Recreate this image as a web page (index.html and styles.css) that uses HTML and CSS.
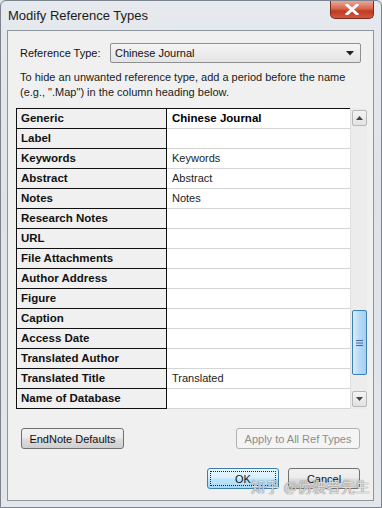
FILE: index.html
```html
<!DOCTYPE html>
<html>
<head>
<meta charset="utf-8">
<link rel="stylesheet" href="styles.css">
</head>
<body>
<div class="window">
  <div class="titlebar">
    <span class="title">Modify Reference Types</span>
    <div class="close"><svg width="16" height="11" viewBox="0 0 16 11"><path d="M3 1 L13 10 M13 1 L3 10" stroke="#fff" stroke-width="3" stroke-linecap="square"/></svg></div>
  </div>
  <div class="client">
    <div class="typerow">
      <span class="lbl">Reference Type:</span>
      <div class="select"><span>Chinese Journal</span><svg width="8" height="5" viewBox="0 0 8 5"><path d="M0 0 H8 L4 4.5 Z" fill="#222"/></svg></div>
    </div>
    <p class="hint">To hide an unwanted reference type, add a period before the name<br>(e.g., ".Map") in the column heading below.</p>
    <div class="gridwrap">
      <div class="grid">
        <div class="k">Generic</div><div class="v head">Chinese Journal</div>
        <div class="k">Label</div><div class="v"></div>
        <div class="k">Keywords</div><div class="v">Keywords</div>
        <div class="k">Abstract</div><div class="v">Abstract</div>
        <div class="k">Notes</div><div class="v">Notes</div>
        <div class="k">Research Notes</div><div class="v"></div>
        <div class="k">URL</div><div class="v"></div>
        <div class="k">File Attachments</div><div class="v"></div>
        <div class="k">Author Address</div><div class="v"></div>
        <div class="k">Figure</div><div class="v"></div>
        <div class="k">Caption</div><div class="v"></div>
        <div class="k">Access Date</div><div class="v"></div>
        <div class="k">Translated Author</div><div class="v"></div>
        <div class="k">Translated Title</div><div class="v">Translated</div>
        <div class="k">Name of Database</div><div class="v"></div>
      </div>
      <div class="scroll">
        <div class="arrow"><svg width="7" height="4" viewBox="0 0 7 4"><path d="M0 4 H7 L3.5 0 Z" fill="#444"/></svg></div>
        <div class="track"><div class="thumb"><svg width="7" height="6" viewBox="0 0 7 6"><path d="M0 0.5H7M0 3H7M0 5.5H7" stroke="#3d6b9a" stroke-width="1"/></svg></div></div>
        <div class="arrow"><svg width="7" height="4" viewBox="0 0 7 4"><path d="M0 0 H7 L3.5 4 Z" fill="#444"/></svg></div>
      </div>
    </div>
    <div class="btnrow">
      <button class="btn defaults">EndNote Defaults</button>
      <button class="btn disabled">Apply to All Ref Types</button>
    </div>
    <div class="btnrow2">
      <button class="btn ok">OK</button>
      <button class="btn cancel">Cancel</button>
      <span class="watermark">知乎 @伪装者先生</span>
    </div>
  </div>
</div>
</body>
</html>
```

FILE: styles.css
```css
html, body { margin: 0; padding: 0; }
body { width: 382px; height: 508px; overflow: hidden; background: #dfe4ea; font-family: "Liberation Sans", Arial, sans-serif; }
.window {
  width: 382px; height: 508px; box-sizing: border-box;
  background: linear-gradient(180deg, #e6e9ed 0%, #dfe3e8 40%, #e3e6ea 100%);
  border: 1px solid #7b838c; border-radius: 6px 6px 0 0;
  display: flex; flex-direction: column;
}
.titlebar { height: 29px; display: flex; align-items: flex-start; justify-content: space-between; flex: none; }
.title { font-family: "Liberation Sans", Arial, sans-serif; font-size: 13px; color: #1a1a1a; margin: 7px 0 0 7px; }
.close {
  width: 44px; height: 18px; margin: 0 7px 0 0; box-sizing: border-box;
  border: 1px solid #7a2a22; border-top: none; border-radius: 0 0 5px 5px;
  background: linear-gradient(180deg, #e9a898 0%, #d7664e 45%, #c03a22 60%, #d2583c 100%);
  display: flex; align-items: center; justify-content: center;
}
.client {
  margin: 0 7px 0 6px; height: 471px; box-sizing: border-box;
  background: #f0f0f0; border: 1px solid #8d959d;
  font-size: 11px; color: #111;
  display: flex; flex-direction: column;
}
.typerow { display: flex; align-items: center; margin: 12px 0 0 12px; height: 20px; flex: none; }
.lbl { font-size: 11px; width: 90px; }
.select {
  width: 251px; height: 20px; box-sizing: border-box; border: 1px solid #8e8f8f; border-radius: 2px;
  background: linear-gradient(#f5f5f5, #e4e4e4);
  display: flex; align-items: center; justify-content: space-between; padding: 0 6px 0 4px;
  font-size: 11px;
}
.hint { margin: 7px 0 0 12px; font-size: 11px; line-height: 15px; color: #1a1a1a; white-space: nowrap; flex: none; }
.gridwrap { display: flex; margin: 8px 0 0 8px; height: 301px; width: 351px; flex: none; }
.grid {
  width: 334px; display: grid; grid-template-columns: 150px 183px; grid-auto-rows: 20px;
  border-top: 1px solid #111; border-left: 1px solid #111; box-sizing: border-box; height: 301px;
  background: #fff;
}
.k {
  background: #f0f0f0; border-right: 1px solid #111; border-bottom: 1px solid #111;
  font-weight: bold; font-size: 11.5px; padding-left: 4px; line-height: 19px; color: #111; white-space: nowrap;
}
.v {
  background: #fff; border-bottom: 1px solid #d4d4d4; font-size: 11px; padding-left: 5px; line-height: 19px; color: #222;
}
.v.head { font-weight: bold; color: #000; font-size: 11.5px; }
.scroll { width: 17px; display: flex; flex-direction: column; align-items: center; background: #ececec; border-left: 1px solid #e0e0e0; padding-top: 2px; padding-bottom: 2px; box-sizing: border-box; height: 301px; }
.arrow {
  width: 15px; height: 16px; box-sizing: border-box; border: 1px solid #b8b8b8; border-radius: 2px;
  background: linear-gradient(#f4f4f4, #e2e2e2); display: flex; align-items: center; justify-content: center; flex: none;
}
.track { flex: 1; width: 15px; display: flex; flex-direction: column; justify-content: flex-end; padding-bottom: 16px; }
.thumb {
  height: 65px; width: 15px; box-sizing: border-box; border: 1px solid #3c7fb1; border-radius: 2px;
  background: linear-gradient(90deg, #d9ecfb, #b6daf6 50%, #a6cff1);
  display: flex; align-items: center; justify-content: center;
}
.btnrow { display: flex; justify-content: space-between; margin: 19px 13px 0 13px; flex: none; }
.btnrow2 { display: flex; justify-content: flex-end; gap: 9px; margin: 19px 13px 0 0; position: relative; flex: none; }
.btn {
  height: 21px; box-sizing: border-box; border: 1px solid #707070; border-radius: 3px;
  background: linear-gradient(#f2f2f2 0%, #ebebeb 48%, #dddddd 52%, #cfcfcf 100%);
  font-family: "Liberation Sans", Arial, sans-serif; font-size: 11px; color: #111; padding: 0; white-space: nowrap;
}
.defaults { width: 103px; }
.btn.disabled { border-color: #adb2b5; background: #f4f4f4; color: #8d8d8d; width: 124px; }
.ok { width: 72px; border-color: #3c7fb1; background: linear-gradient(#eaf6fd 0%, #d9f0fc 48%, #bee6fd 52%, #a7d9f5 100%); outline: 1px dotted #222; outline-offset: -4px; }
.cancel { width: 72px; }
.watermark { position: absolute; right: -10px; top: 10px; font-family: "Noto Sans CJK SC", sans-serif; font-size: 14px; line-height: 16px; color: rgba(255,255,255,0.75); text-shadow: 0 0 1px #777, 0 0 1px #777; letter-spacing: 0.5px; pointer-events: none; }
```
